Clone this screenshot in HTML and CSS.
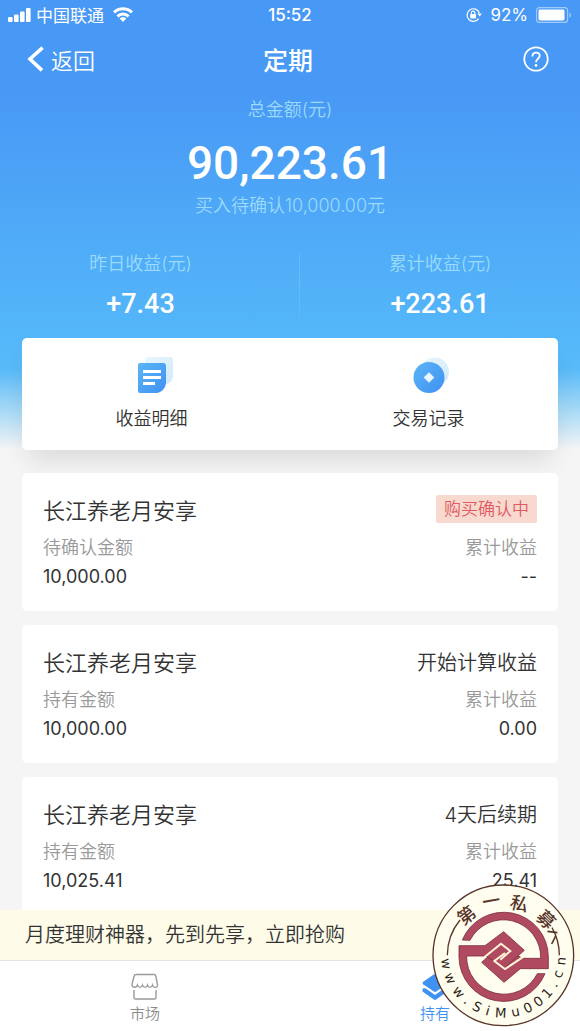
FILE: index.html
```html
<!DOCTYPE html>
<html lang="zh-CN">

<head>
    <meta charset="UTF-8">
    <meta name="viewport" content="width=device-width, initial-scale=1.0">
    <title>定期</title>
    <link rel="stylesheet" href="styles.css">
</head>

<body>
    <div class="app">
        <main class="content">
            <div class="hero">
                <div class="status-bar">
                    <div class="status-left">
                        <svg width="23" height="14" viewBox="0 0 23 14" fill="#fff">
                            <rect x="0" y="9" width="4.6" height="5" rx="1" />
                            <rect x="6" y="6.500" width="4.6" height="7.500" rx="1" />
                            <rect x="12" y="3.500" width="4.6" height="10.500" rx="1" />
                            <rect x="18" y="0" width="4.6" height="14" rx="1" />
                        </svg>
                        <span>中国联通</span>
                        <svg class="wifi" width="20" height="15" viewBox="0 0 20 15" fill="none" stroke="#fff" stroke-width="3">
                            <path d="M1 5.400a13 13 0 0 1 18 0" />
                            <path d="M4.400 9.300a8.200 8.200 0 0 1 11.200 0" />
                            <path d="M10 15L6.600 11.600a4.600 4.600 0 0 1 6.800 0z" fill="#fff" stroke="none" />
                        </svg>
                    </div>
                    <span class="time">15:52</span>
                    <div class="status-right">
                        <svg width="16" height="16" viewBox="0 0 16 16">
                            <path d="M12.6 11.6A6.3 6.3 0 1 1 13.3 6" fill="none" stroke="#fff" stroke-width="1.2" />
                            <path d="M11.4 6.4h4.4L13.7 9.4z" fill="#fff" />
                            <rect x="4.2" y="7" width="5.8" height="4.4" rx=".6" fill="#fff" />
                            <path d="M5.4 7.2V5.8a1.7 1.7 0 0 1 3.4 0v1.4" fill="none" stroke="#fff" stroke-width="1.1" />
                        </svg>
                        <span>92%</span>
                        <svg width="36" height="16" viewBox="0 0 36 16">
                            <rect x=".6" y=".6" width="31" height="14.8" rx="3" fill="none" stroke="#a3cbfa" stroke-width="1.1" />
                            <rect x="2.5" y="2.5" width="26" height="11" rx="1.4" fill="#fff" />
                            <path d="M33.4 5.4c2 .8 2 4.4 0 5.2z" fill="#a3cbfa" />
                        </svg>
                    </div>
                </div>

                <header class="nav">
                    <a class="back" href="#">
                        <svg width="18" height="26" viewBox="0 0 18 26" fill="none" stroke="#fff" stroke-width="3.6">
                            <path d="M15.6 1.6L3 13l12 11.4" />
                        </svg>
                        <span>返回</span>
                    </a>
                    <h1>定期</h1>
                    <button class="help" type="button" aria-label="帮助">
                        <svg width="26" height="26" viewBox="0 0 26 26" fill="none" stroke="#fff" stroke-width="1.8">
                            <circle cx="13" cy="13" r="11.7" />
                            <path d="M9.4 10.4c0-2.4 1.5-3.8 3.7-3.8 2.1 0 3.6 1.3 3.6 3.2 0 2.8-3.7 3.2-3.7 6.5" />
                            <circle cx="13" cy="19.4" r="1.3" fill="#fff" stroke="none" />
                        </svg>
                    </button>
                </header>

                <section class="total">
                    <p class="hero-label">总金额(元)</p>
                    <p class="total-amount">90,223.61</p>
                    <p class="hero-label">买入待确认10,000.00元</p>
                </section>

                <section class="stats">
                    <div class="stat">
                        <p class="hero-label">昨日收益(元)</p>
                        <p class="stat-value">+7.43</p>
                    </div>
                    <div class="stat">
                        <p class="hero-label">累计收益(元)</p>
                        <p class="stat-value">+223.61</p>
                    </div>
                </section>

                <nav class="actions">
                    <a href="#">
                        <svg width="42" height="40" viewBox="0 0 42 40">
                            <defs>
                                <linearGradient id="blue" x1="0" y1="0" x2="1" y2="1">
                                    <stop offset="0" stop-color="#5bb6f6" />
                                    <stop offset="1" stop-color="#4090f3" />
                                </linearGradient>
                                <linearGradient id="pale" x1="0" y1="0" x2="1" y2="1">
                                    <stop offset="0" stop-color="#e8f6fd" />
                                    <stop offset="1" stop-color="#cfe9fb" />
                                </linearGradient>
                            </defs>
                            <path d="M17 2h22q3 0 3 3v16q-1 8-9 9H14V5q0-3 3-3z" fill="url(#pale)" />
                            <path d="M9 8h23q3 0 3 3v17q-1 8-9 10H9q-2 0-2-2V10q0-2 2-2z" fill="url(#blue)" />
                            <path d="M12 16.500h18M12 22.500h18M12 28.500h12" stroke="#fff" stroke-width="2.800" />
                        </svg>
                        <span>收益明细</span>
                    </a>
                    <a href="#">
                        <svg width="42" height="40" viewBox="0 0 42 40">
                            <circle cx="26.500" cy="17" r="14.500" fill="url(#pale)" />
                            <circle cx="21" cy="22.500" r="15.500" fill="url(#blue)" />
                            <path d="M21 17.200l5.300 5.300-5.300 5.300-5.300-5.300z" fill="#e9f6fe" />
                        </svg>
                        <span>交易记录</span>
                    </a>
                </nav>
            </div>

            <div class="list">
                <article class="card">
                    <div class="row title-row">
                        <h2>长江养老月安享</h2>
                        <span class="badge">购买确认中</span>
                    </div>
                    <div class="row label-row"><span>待确认金额</span><span>累计收益</span></div>
                    <div class="row value-row"><span>10,000.00</span><span>--</span></div>
                </article>
                <article class="card">
                    <div class="row title-row">
                        <h2>长江养老月安享</h2>
                        <span class="state">开始计算收益</span>
                    </div>
                    <div class="row label-row"><span>持有金额</span><span>累计收益</span></div>
                    <div class="row value-row"><span>10,000.00</span><span>0.00</span></div>
                </article>
                <article class="card">
                    <div class="row title-row">
                        <h2>长江养老月安享</h2>
                        <span class="state">4天后续期</span>
                    </div>
                    <div class="row label-row"><span>持有金额</span><span>累计收益</span></div>
                    <div class="row value-row"><span>10,025.41</span><span>25.41</span></div>
                </article>
            </div>
        </main>

        <a class="notice" href="#">月度理财神器，先到先享，立即抢购</a>

        <nav class="tab-bar">
            <a class="tab" href="#">
                <svg width="28" height="28" viewBox="0 0 28 28" fill="none" stroke="#9a9a9a" stroke-width="1.400">
                    <path d="M5 1.500h18q1.500 0 1.800 1.500l1.700 8.500c.4 3.600-4 4-5 .6-.9 3-4.100 3-5 0-.9 3-4.100 3-5 0-.9 3-4.100 3-5 0-1.400 3.400-6 2.600-5.500-1L3.200 3Q3.500 1.500 5 1.500z" />
                    <path d="M3 17v7.500q0 1.500 1.500 1.500h19q1.500 0 1.500-1.500V17" />
                </svg>
                <span>市场</span>
            </a>
            <a class="tab active" href="#">
                <svg width="28" height="28" viewBox="0 0 28 28" fill="#3f92f1">
                    <path d="M12.800 1.500q1.200-.8 2.400 0l10.600 7.300q1.500 1.200 0 2.400l-10.600 7.300q-1.200.8-2.400 0L2.200 11.200q-1.500-1.200 0-2.400z" />
                    <path d="M1.500 15.500l3-.2L14 22l9.500-6.700 3 .2v3l-11.300 8q-1.200.8-2.400 0l-11.300-8z" />
                </svg>
                <span>持有</span>
            </a>
        </nav>

        <!-- 水印 -->
        <svg class="stamp" viewBox="0 0 429 429">
            <circle cx="214" cy="214" r="211" fill="#fffdee" stroke="#58352b" stroke-width="4" />
            <path d="M46 214A168 168 0 0 1 84 108M382 214A168 168 0 0 0 360 131" fill="none" stroke="#58352b" stroke-width="4" />
            <path d="M346 142l30 4M359 180l12-24" fill="none" stroke="#58352b" stroke-width="5" />
            <g class="stamp-cn">
                <text transform="translate(104 94) rotate(-38)">第</text>
                <text transform="translate(178 51) rotate(-10)">一</text>
                <text transform="translate(262 59) rotate(14)">私</text>
                <text transform="translate(342 107) rotate(44)">募</text>
            </g>
            <text class="stamp-url"
                x="27 36 59 92 118 158 188 241 282 317 347 373 387 399"
                y="225 273 320 355 375 392 400 399 389 371 346 313 285 245"
                rotate="82 67 51 39 27 16 3 -12 -25 -37 -49 -60 -71 -84">www.SiMu001.cn</text>
            <g transform="translate(69 73)">
                <g fill="#b04a60" stroke="#7c2f40" stroke-width="2.500" stroke-linejoin="round">
                    <path d="M22 95A134 134 0 0 1 280 145V181H196L147 222 80 162 138 110 202 150H257A112 112 0 0 0 45 96z" />
                    <path d="M270 196A134 134 0 0 1 12 146V112H90L146 70 208 126 150 178 92 143H35A112 112 0 0 0 247 196z" />
                </g>
                <path d="M84 150L138 106 166 128 136 154M206 145L150 182 118 158 150 134" fill="none" stroke="#fff6d8" stroke-width="6" />
            </g>
        </svg>
    </div>
</body>

</html>
```
FILE: styles.css
```css
* {
    box-sizing: border-box;
}

body {
    margin: 0;
    font-family: Inter, "Noto Sans CJK SC", sans-serif;
    font-weight: 350;
    color: #333;
    background: #f5f5f5;
}

h1,
h2,
p {
    margin: 0;
}

a {
    color: inherit;
    text-decoration: none;
}

svg {
    display: block;
    flex-shrink: 0;
}

.app {
    position: relative;
    height: 100vh;
    display: flex;
    flex-direction: column;
}

.content {
    flex: 1;
    min-height: 0;
    overflow-y: auto;
    scrollbar-width: none;
}

/* header */
.hero {
    color: #fff;
    background: linear-gradient(#4898f5 0, #4898f5 19%, #54b7f9 75%, #58baf8 82%, #a5d9f6 91%, #f5f5f5 100%);
}

.status-bar {
    display: grid;
    grid-template-columns: 1fr auto 1fr;
    align-items: center;
    height: 29px;
    padding: 0 8px;
    font-size: 17px;
    font-weight: 400;
}

.status-left,
.status-right {
    display: flex;
    align-items: center;
    gap: 5px;
}

.wifi {
    margin-left: 4px;
}

.status-right {
    justify-content: flex-end;
    gap: 8px;
}

.time {
    font-weight: 500;
}

.nav {
    display: grid;
    grid-template-columns: 1fr auto 1fr;
    align-items: center;
    height: 59px;
    padding: 0 31px 0 27px;
}

.back {
    display: flex;
    align-items: center;
    gap: 6px;
    font-size: 22px;
}

.nav h1 {
    font-size: 25px;
    font-weight: 500;
}

.help {
    justify-self: end;
    padding: 0;
    border: 0;
    background: none;
}

.hero-label {
    font-size: 18px;
    line-height: 28px;
    color: #9bdafb;
}

.total {
    padding-top: 8px;
    text-align: center;
}

.total-amount {
    padding-top: 10px;
    font-family: Roboto, sans-serif;
    font-size: 46px;
    font-weight: 500;
    line-height: 58px;
}

.stats {
    display: grid;
    grid-template-columns: 1fr 1fr;
    gap: 18px;
    margin-top: 34px;
    text-align: center;
}

.stat {
    height: 64px;
}

.stat + .stat {
    border-left: 1px solid #64bbfa;
}

.stat .hero-label {
    line-height: 20px;
}

.stat-value {
    padding-top: 10px;
    font-family: Roboto, sans-serif;
    font-size: 27px;
    font-weight: 500;
    line-height: 40px;
}

.actions {
    display: grid;
    grid-template-columns: 1fr 1fr;
    gap: 18px;
    margin: 0 22px;
    padding: 17px 0;
    color: #333;
    background: #fff;
    border-radius: 5px;
    box-shadow: 0 16px 24px -6px rgba(0, 0, 0, 0.11);
}

.stats + .actions {
    margin-top: 20px;
}

.actions a {
    display: flex;
    flex-direction: column;
    align-items: center;
    gap: 10px;
    font-size: 18px;
    line-height: 28px;
}

/* holdings */
.list {
    display: flex;
    flex-direction: column;
    gap: 14px;
    padding: 23px 22px 14px;
}

.card {
    position: relative;
    padding: 20px 21px;
    background: #fff;
    border-radius: 5px;
}

.row {
    display: flex;
    align-items: center;
    justify-content: space-between;
}

.title-row {
    height: 32px;
    margin-bottom: 9px;
}

.card h2 {
    font-size: 22px;
    font-weight: 350;
}

.badge {
    padding: 0 8px;
    font-size: 17px;
    line-height: 28px;
    color: #e05a5e;
    background: #f8d9cf;
    border-radius: 2px;
}

.state {
    font-size: 20px;
}

.label-row {
    font-size: 18px;
    line-height: 28px;
    color: #999;
}

.value-row {
    font-size: 18px;
    font-weight: 400;
    line-height: 29px;
}

/* bottom */
.notice {
    padding: 0 25px;
    font-size: 20px;
    line-height: 50px;
    background: #fefbe9;
}

.tab-bar {
    display: grid;
    grid-template-columns: 1fr 1fr;
    height: 71px;
    border-top: 1px solid #e4e4e4;
    background: #fff;
}

.tab {
    display: flex;
    flex-direction: column;
    align-items: center;
    padding-top: 12px;
    font-size: 15px;
    line-height: 26px;
    color: #8c8c8c;
}

.tab.active {
    color: #3f92f1;
}

.stamp {
    position: absolute;
    right: 5px;
    bottom: 4px;
    width: 143px;
    height: 143px;
}

.stamp-cn {
    font-size: 54px;
    font-weight: 500;
    text-anchor: middle;
    dominant-baseline: central;
    fill: #58352b;
}

.stamp-url {
    font-family: "DejaVu Sans", sans-serif;
    font-size: 40px;
    font-weight: 400;
    fill: #2e1f1b;
}
```
